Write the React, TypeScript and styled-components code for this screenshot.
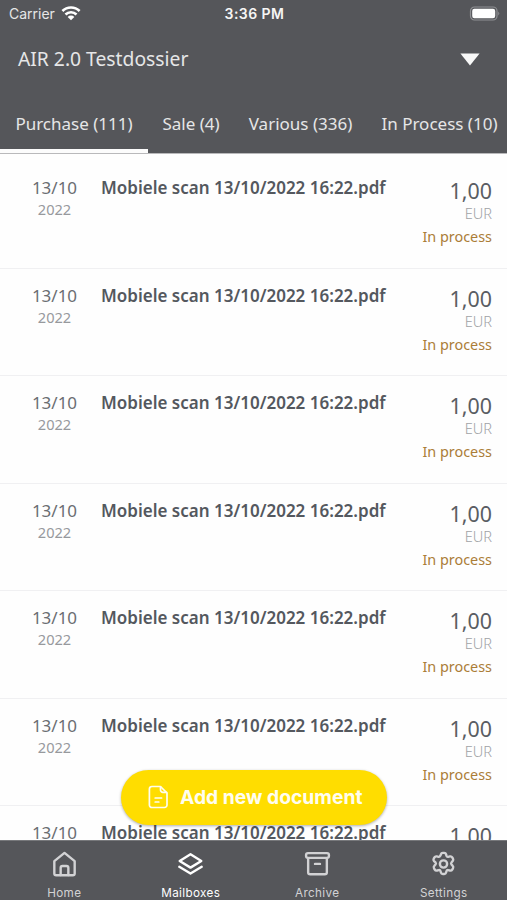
import React from 'react';
import styled, { createGlobalStyle } from 'styled-components';

const Global = createGlobalStyle`
  *, *::before, *::after { box-sizing: border-box; }
  body { margin: 0; background: #fff; }
  button { font: inherit; border: 0; background: none; padding: 0; color: inherit; }
`;

const Screen = styled.div`
  position: relative;
  display: flex;
  flex-direction: column;
  width: 507px;
  height: 900px;
  overflow: hidden;
  background: #fefefe;
  font-family: 'Noto Sans', sans-serif;
`;

const Header = styled.header`
  flex: none;
  height: 154px;
  background: #55565a;
  color: #e6e6e7;
  border-bottom: 1px solid #b9b9bb;
`;

const StatusBar = styled.div`
  display: grid;
  grid-template-columns: 1fr auto 1fr;
  align-items: center;
  height: 27px;
  padding: 0 7px 0 9px;
  font-family: Inter, sans-serif;
  font-size: 14px;
  line-height: 27px;
`;

const Carrier = styled.div`
  display: flex;
  align-items: center;
  gap: 6px;
`;

const Clock = styled.div`
  font-weight: 600;
  letter-spacing: 0.45px;
  color: #f5f5f5;
`;

const BatterySlot = styled.div`
  display: flex;
  justify-content: flex-end;
`;

const DossierBar = styled.div`
  display: flex;
  align-items: center;
  justify-content: space-between;
  height: 64px;
  padding: 0 27px 0 18px;
  font-size: 19.3px;
  line-height: 26px;
`;

const Tabs = styled.nav`
  display: flex;
  height: 62px;
`;

const Tab = styled.button<{ $width: number; $active?: boolean }>`
  flex: none;
  width: ${p => p.$width}px;
  height: 62px;
  padding: 3px 0 0;
  font-size: 17px;
  line-height: 59px;
  text-align: center;
  white-space: nowrap;
  box-shadow: ${p => (p.$active ? 'inset 0 -4px #fcfcfc' : 'none')};
`;

const List = styled.main`
  flex: 1;
  min-height: 0;
  padding-top: 7px;
  overflow: hidden;
`;

const Row = styled.article`
  display: flex;
  height: 107.5px;
  padding: 15px 15px 0 0;
  border-bottom: 1px solid #f0f0f2;
`;

const DateColumn = styled.div`
  width: 101px;
  padding-left: 8px;
  text-align: center;
`;

const Day = styled.div`
  font-size: 17px;
  line-height: 24px;
  color: #6a6d72;
`;

const Year = styled.div`
  font-size: 14.6px;
  line-height: 18px;
  color: #97999d;
`;

const FileName = styled.div`
  flex: 1;
  font-size: 17px;
  font-weight: 600;
  line-height: 24px;
  white-space: nowrap;
  color: #54585e;
`;

const AmountColumn = styled.div`
  padding-top: 2px;
  text-align: right;
`;

const Amount = styled.div`
  font-size: 21.4px;
  line-height: 26px;
  color: #5a5d63;
`;

const Currency = styled.div`
  font-size: 14.6px;
  font-weight: 300;
  line-height: 18px;
  color: #a0a2a6;
`;

const Status = styled.div`
  padding-top: 3px;
  font-size: 14.4px;
  line-height: 24px;
  color: #ab7d38;
`;

const AddButton = styled.button`
  position: absolute;
  left: 121px;
  top: 770px;
  display: flex;
  align-items: center;
  gap: 10px;
  width: 266px;
  height: 55px;
  padding: 0 0 1px 25px;
  border-radius: 28px;
  background: #ffdd00;
  box-shadow: 0 1px 3px rgba(0, 0, 0, 0.32);
  color: #fffdf0;
  font-family: Inter, sans-serif;
  font-size: 19.3px;
  font-weight: 700;
  white-space: nowrap;
`;

const TabBar = styled.nav`
  flex: none;
  display: grid;
  grid-template-columns: repeat(4, 1fr);
  height: 60px;
  padding-left: 1px;
  background: #55565a;
  border-top: 1px solid #77787b;
`;

const NavItem = styled.button<{ $active?: boolean }>`
  display: flex;
  flex-direction: column;
  align-items: center;
  padding-top: 10px;
  color: ${p => (p.$active ? '#ffffff' : '#d2d2d4')};
  font-family: Inter, sans-serif;
  font-size: 11.7px;
  line-height: 14px;
  letter-spacing: 0.35px;
  gap: 8px;
`;

const Stroke = styled.svg`
  flex: none;
  display: block;
  fill: none;
  stroke: currentColor;
  stroke-width: 2.3;
  stroke-linecap: round;
  stroke-linejoin: round;
`;

const WifiIcon = () => (
  <svg width="20" height="15" viewBox="0 0 20 15" fill="none" stroke="#fff" strokeWidth="2.6">
    <path d="M1.4 5a12.2 12.2 0 0 1 17.2 0" />
    <path d="M4.5 8.5a7.7 7.7 0 0 1 11 0" />
    <path d="M10 14.2 6.7 11a4.6 4.6 0 0 1 6.6 0z" fill="#fff" stroke="none" />
  </svg>
);

const BatteryIcon = () => (
  <svg width="31" height="15" viewBox="0 0 31 15">
    <rect x="1.5" y="1" width="26.5" height="13" rx="4" fill="none" stroke="#8f9093" strokeWidth="1.2" />
    <rect x="3.2" y="2.7" width="23" height="9.6" rx="2.2" fill="#fff" />
    <path d="M29.3 5.4q1.9 2.1 0 4.2z" fill="#949598" />
  </svg>
);

const CaretIcon = () => (
  <svg width="20" height="13" viewBox="0 0 20 13">
    <path d="M.4.5h19.2L10 12.5z" fill="#f8f8f8" />
  </svg>
);

const DocumentIcon = () => (
  <Stroke width="24" height="24" viewBox="0 0 24 24">
    <path strokeWidth="1.7" d="M14.5 1.5H6A2.6 2.6 0 0 0 3.4 4v16A2.5 2.5 0 0 0 6 22.5h12.5A2.5 2.5 0 0 0 21 20V8z" />
    <path strokeWidth="1.7" d="M14.5 1.8V5A2.4 2.4 0 0 0 17 7.4h3.6M9.2 13h6.4M9.2 17h3.6" />
  </Stroke>
);

const HomeIcon = () => (
  <Stroke width="27" height="27" viewBox="0 0 26 26">
    <path d="M3.2 9.8 13 1.8l9.8 8V21.6a1.8 1.8 0 0 1-1.8 1.8H5A1.8 1.8 0 0 1 3.2 21.6z" />
    <path d="M9.3 23.2V16.2a1.8 1.8 0 0 1 1.8-1.8h3.8a1.8 1.8 0 0 1 1.8 1.8v7" />
  </Stroke>
);

const LayersIcon = () => (
  <Stroke width="27" height="27" viewBox="0 0 26 26">
    <path d="M13 3.2 23.4 9.6 13 16 2.6 9.6z" />
    <path d="M2.2 15.2 13 21.7l10.8-6.5" />
  </Stroke>
);

const ArchiveIcon = () => (
  <Stroke width="27" height="27" viewBox="0 0 26 26">
    <rect x="2" y="2" width="22" height="4.6" rx="1.8" />
    <path d="M4 7V20.4a2 2 0 0 0 2 2h14a2 2 0 0 0 2-2V7M10.6 12.4h4.8" />
  </Stroke>
);

const GearIcon = () => (
  <Stroke width="27" height="27" viewBox="0 0 26 26">
    <path d="M10.5 3.3Q10.9 1.8 12.3 1.8h1.4q1.4 0 1.8 1.5l.4 1.4q.4 1.1 1.6.9l1.7-.4q1.5-.3 2.2.9l.7 1.2q.7 1.3-.3 2.4l-1.1 1.3q-.8 1 0 2l1.1 1.3q1 1.1.3 2.4l-.7 1.2q-.7 1.2-2.2.9l-1.7-.4q-1.2-.2-1.6.9l-.4 1.4q-.4 1.5-1.8 1.5h-1.4q-1.4 0-1.8-1.5l-.4-1.4q-.4-1.1-1.6-.9l-1.7.4q-1.5.3-2.2-.9l-.7-1.2q-.7-1.3.3-2.4l1.1-1.3q.8-1 0-2L3.900 9.700q-1-1.100-.3-2.400l.7-1.200q.7-1.200 2.200-.9l1.700.4q1.200.2 1.600-.9z" />
    <circle cx="13" cy="12.500" r="3.500" />
  </Stroke>
);

const rows = Array.from({ length: 7 }, (_, id) => ({
  id,
  day: '13/10',
  year: '2022',
  file: 'Mobiele scan 13/10/2022 16:22.pdf',
  amount: '1,00',
  currency: 'EUR',
  status: 'In process',
}));

export default function App() {
  return (
    <Screen>
      <Global />
      <Header>
        <StatusBar>
          <Carrier>Carrier <WifiIcon /></Carrier>
          <Clock>3:36 PM</Clock>
          <BatterySlot><BatteryIcon /></BatterySlot>
        </StatusBar>
        <DossierBar>
          <span>AIR 2.0 Testdossier</span>
          <CaretIcon />
        </DossierBar>
        <Tabs>
          <Tab $width={148} $active>Purchase (111)</Tab>
          <Tab $width={86}>Sale (4)</Tab>
          <Tab $width={133}>Various (336)</Tab>
          <Tab $width={145}>In Process (10)</Tab>
        </Tabs>
      </Header>
      <List>
        {rows.map(r => (
          <Row key={r.id}>
            <DateColumn>
              <Day>{r.day}</Day>
              <Year>{r.year}</Year>
            </DateColumn>
            <FileName>{r.file}</FileName>
            <AmountColumn>
              <Amount>{r.amount}</Amount>
              <Currency>{r.currency}</Currency>
              <Status>{r.status}</Status>
            </AmountColumn>
          </Row>
        ))}
      </List>
      <TabBar>
        <NavItem><HomeIcon />Home</NavItem>
        <NavItem $active><LayersIcon />Mailboxes</NavItem>
        <NavItem><ArchiveIcon />Archive</NavItem>
        <NavItem><GearIcon />Settings</NavItem>
      </TabBar>
      <AddButton><DocumentIcon />Add new document</AddButton>
    </Screen>
  );
}
